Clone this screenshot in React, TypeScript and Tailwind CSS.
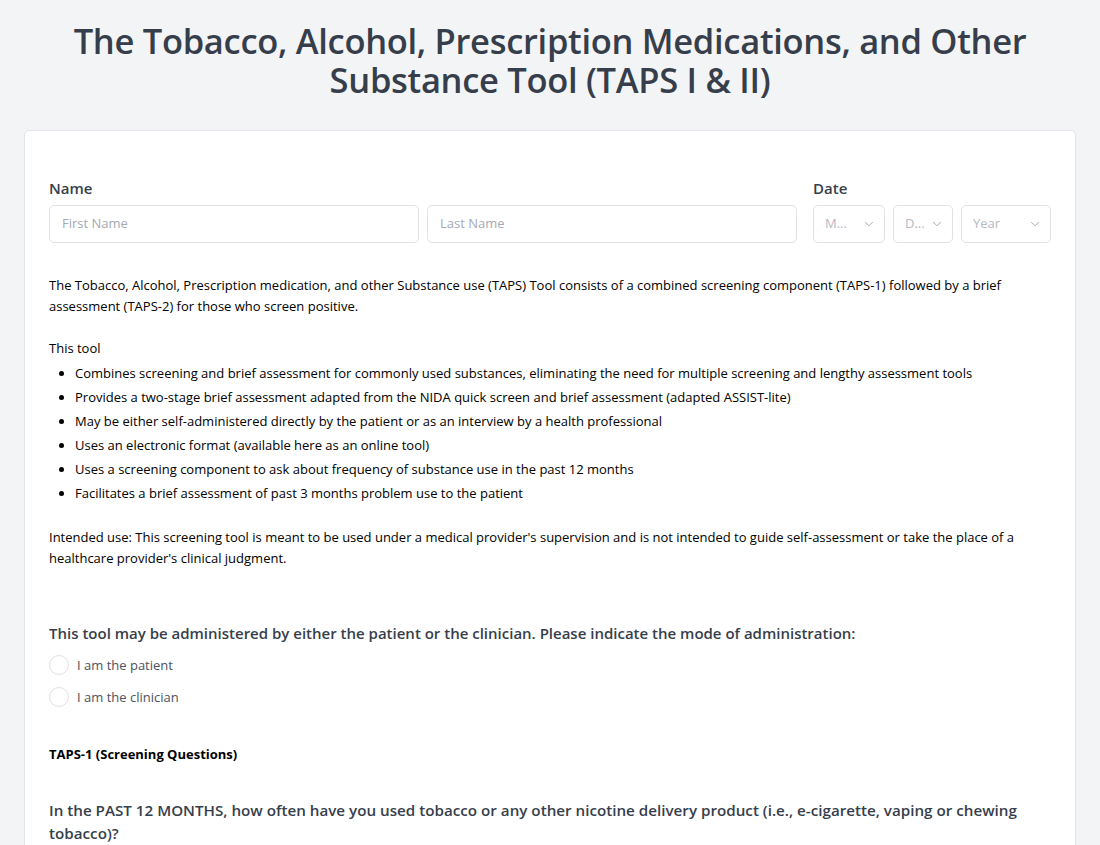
import React from "react";

const font = { fontFamily: '"Open Sans", "Noto Sans", "Liberation Sans", sans-serif' };

function Chevron() {
  return (
    <svg width="14" height="14" viewBox="0 0 24 24" fill="none" stroke="#9ca3af" strokeWidth="1.6" strokeLinecap="round" strokeLinejoin="round">
      <path d="M6 9l6 6 6-6" />
    </svg>
  );
}

function Select({ label, w }: { label: string; w: string }) {
  return (
    <div className={`${w} h-[38px] border border-[#e0e2e7] rounded-[5px] flex items-center justify-between pl-[11px] pr-[8px] text-[13px] text-[#b6bac2] bg-white`}>
      <span>{label}</span>
      <Chevron />
    </div>
  );
}

export default function App() {
  const items = [
    "Combines screening and brief assessment for commonly used substances, eliminating the need for multiple screening and lengthy assessment tools",
    "Provides a two-stage brief assessment adapted from the NIDA quick screen and brief assessment (adapted ASSIST-lite)",
    "May be either self-administered directly by the patient or as an interview by a health professional",
    "Uses an electronic format (available here as an online tool)",
    "Uses a screening component to ask about frequency of substance use in the past 12 months",
    "Facilitates a brief assessment of past 3 months problem use to the patient",
  ];
  return (
    <div className="min-h-screen bg-[#f3f4f6] px-[24px]" style={font}>
      <h1 className="text-center text-[34.5px] leading-[39px] font-semibold text-[#373e4b] pt-[21px] pb-[31px] tracking-[-0.3px]">
        The Tobacco, Alcohol, Prescription Medications, and Other
        <br />
        Substance Tool (TAPS I &amp; II)
      </h1>
      <div className="bg-white border border-[#e3e5e9] rounded-[5px] px-[24px] pt-[46px] pb-[40px]">
        <div className="flex gap-[16px]">
          <div className="flex-1">
            <div className="text-[15px] font-semibold text-[#373e4b] leading-[20px] mb-[7px] mt-[1px]">Name</div>
            <div className="flex gap-[8px]">
              <div className="flex-1 h-[38px] border border-[#e0e2e7] rounded-[5px] flex items-center px-[12px] text-[13px] text-[#a4a9b3]">First Name</div>
              <div className="flex-1 h-[38px] border border-[#e0e2e7] rounded-[5px] flex items-center px-[12px] text-[13px] text-[#a4a9b3]">Last Name</div>
            </div>
          </div>
          <div>
            <div className="text-[15px] font-semibold text-[#373e4b] leading-[20px] mb-[7px] mt-[1px]">Date</div>
            <div className="flex gap-[8px]">
              <Select label="M..." w="w-[72px]" />
              <Select label="D..." w="w-[60px]" />
              <Select label="Year" w="w-[90px]" />
            </div>
          </div>
        </div>

        <div className="text-[13px] text-black leading-[21px] mt-[32px]">
          <p>
            The Tobacco, Alcohol, Prescription medication, and other Substance use (TAPS) Tool consists of a combined screening component (TAPS-1) followed by a brief assessment (TAPS-2) for those who screen positive.
          </p>
          <p className="mt-[21px]">This tool</p>
          <ul className="list-disc pl-[26px] mt-[2px]">
            {items.map((t) => (
              <li key={t} className="leading-[24px]">{t}</li>
            ))}
          </ul>
          <p className="mt-[22px]">
            Intended use: This screening tool is meant to be used under a medical provider's supervision and is not intended to guide self-assessment or take the place of a healthcare provider's clinical judgment.
          </p>
        </div>

        <div className="mt-[54px]">
          <div className="text-[15px] font-semibold text-[#373e4b] leading-[20px]">
            This tool may be administered by either the patient or the clinician. Please indicate the mode of administration:
          </div>
          <div className="mt-[12px] flex flex-col gap-[12px]">
            {["I am the patient", "I am the clinician"].map((t) => (
              <label key={t} className="flex items-center gap-[8px] text-[13px] text-[#4b5260] leading-[20px]">
                <span className="w-[20px] h-[20px] rounded-full border border-[#dfe1e6] bg-white inline-block" />
                {t}
              </label>
            ))}
          </div>
        </div>

        <div className="mt-[37px] text-[13px] font-bold text-black leading-[20px]">TAPS-1 (Screening Questions)</div>

        <div className="mt-[35px] text-[15.2px] font-semibold text-[#373e4b] leading-[23px]">
          In the PAST 12 MONTHS, how often have you used tobacco or any other nicotine delivery product (i.e., e-cigarette, vaping or chewing tobacco)?
        </div>
      </div>
    </div>
  );
}
